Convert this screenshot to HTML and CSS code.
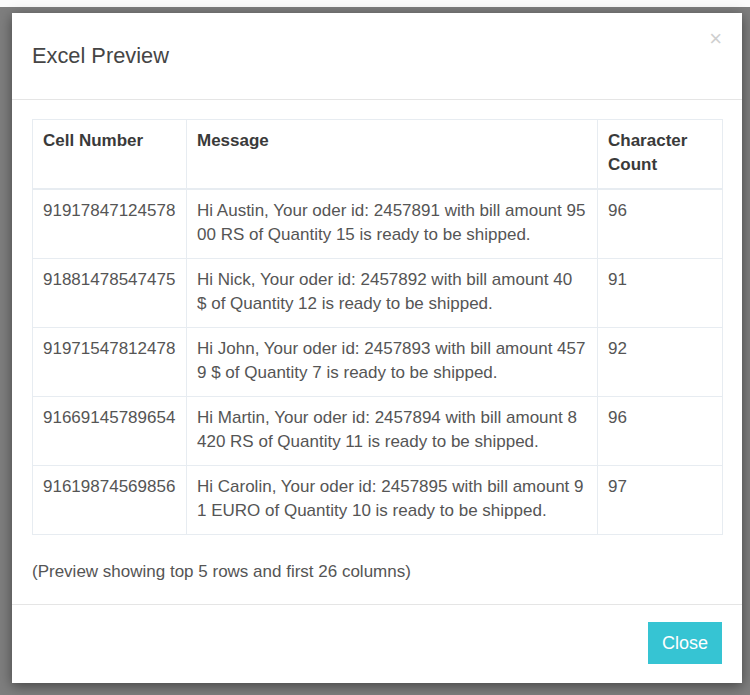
FILE: index.html
```html
<!DOCTYPE html>
<html>
<head>
<meta charset="utf-8">
<title>Excel Preview</title>
<link rel="stylesheet" href="styles.css">
</head>
<body>
<div class="top-strip"></div>
<div class="backdrop">
  <div class="modal">
    <div class="modal-header">
      <h4 class="modal-title">Excel Preview</h4>
      <button class="close" type="button">&times;</button>
    </div>
    <div class="modal-body">
      <table class="preview">
        <colgroup>
          <col class="c1"><col class="c2"><col class="c3">
        </colgroup>
        <thead>
          <tr><th>Cell Number</th><th>Message</th><th>Character Count</th></tr>
        </thead>
        <tbody>
          <tr><td>91917847124578</td><td>Hi Austin, Your oder id: 2457891 with bill amount 95<br>00 RS of Quantity 15 is ready to be shipped.</td><td>96</td></tr>
          <tr><td>91881478547475</td><td>Hi Nick, Your oder id: 2457892 with bill amount 40<br>$ of Quantity 12 is ready to be shipped.</td><td>91</td></tr>
          <tr><td>91971547812478</td><td>Hi John, Your oder id: 2457893 with bill amount 457<br>9 $ of Quantity 7 is ready to be shipped.</td><td>92</td></tr>
          <tr><td>91669145789654</td><td>Hi Martin, Your oder id: 2457894 with bill amount 8<br>420 RS of Quantity 11 is ready to be shipped.</td><td>96</td></tr>
          <tr><td>91619874569856</td><td>Hi Carolin, Your oder id: 2457895 with bill amount 9<br>1 EURO of Quantity 10 is ready to be shipped.</td><td>97</td></tr>
        </tbody>
      </table>
      <p class="note">(Preview showing top 5 rows and first 26 columns)</p>
    </div>
    <div class="modal-footer">
      <button class="btn-close" type="button">Close</button>
    </div>
  </div>
</div>
</body>
</html>
```

FILE: styles.css
```css
* { box-sizing: border-box; }
html, body {
  margin: 0;
  padding: 0;
  height: 100%;
}
body {
  background: #7e7e7e;
  font-family: "Liberation Sans", Arial, sans-serif;
  overflow: hidden;
}
.top-strip {
  height: 7px;
  background: #fafafa;
}
.backdrop {
  padding: 6px 0 0 12px;
}
.modal {
  width: 730px;
  background: #fff;
  box-shadow: 0 3px 12px rgba(0, 0, 0, 0.45);
}
.modal-header {
  height: 87px;
  border-bottom: 1px solid #e5e5e5;
  padding: 0 20px;
  display: flex;
  justify-content: space-between;
  align-items: flex-start;
}
.modal-title {
  margin: 0;
  align-self: center;
  font-size: 21.8px;
  font-weight: normal;
  color: #454545;
  line-height: 1.2;
  padding-top: 1px;
}
.close {
  border: 0;
  background: none;
  padding: 0;
  margin-top: 15px;
  font-family: "Liberation Sans", Arial, sans-serif;
  font-size: 22px;
  line-height: 22px;
  color: #cfcfcf;
}
.modal-body {
  padding: 19px 20px 21px;
}
.preview {
  width: 690px;
  table-layout: fixed;
  border-collapse: collapse;
  font-size: 17px;
  line-height: 24px;
}
.c1 { width: 154px; }
.c2 { width: 411px; }
.c3 { width: 125px; }
.preview th,
.preview td {
  border: 1px solid #e7ecf1;
  padding: 9px 10px 11px;
  text-align: left;
  vertical-align: top;
}
.preview th {
  font-weight: bold;
  color: #3a3a3a;
  border-bottom-width: 2px;
}
.preview td {
  color: #555;
}
.note {
  margin: 25px 0 0;
  font-size: 17px;
  line-height: 23px;
  color: #555;
}
.modal-footer {
  border-top: 1px solid #e5e5e5;
  padding: 17px 20px 19px;
  display: flex;
  justify-content: flex-end;
}
.btn-close {
  width: 74px;
  height: 42px;
  border: 0;
  background: #36c4d3;
  color: #fff;
  font-family: "Liberation Sans", Arial, sans-serif;
  font-size: 18px;
  padding: 0;
}
```
